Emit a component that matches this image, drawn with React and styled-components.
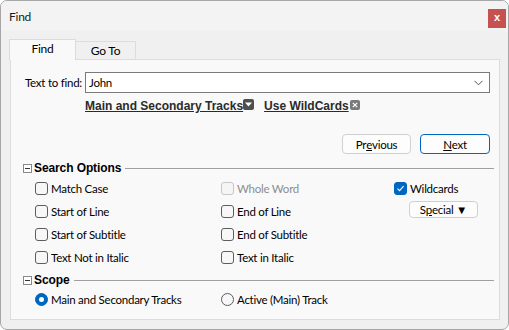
import React from 'react';
import styled, { createGlobalStyle } from 'styled-components';

const GlobalStyle = createGlobalStyle`
  html, body {
    margin: 0;
    padding: 0;
    background: #ffffff;
  }
  body {
    font-family: Lato, "Noto Sans", sans-serif;
    font-size: 11.5px;
    letter-spacing: -0.25px;
    color: #1a1a1a;
  }
`;

const Window = styled.div`
  width: 509px;
  height: 330px;
  box-sizing: border-box;
  border: 1px solid #a6a6a6;
  border-radius: 7px;
  background: #f0f0f0;
  overflow: hidden;
  display: flex;
  flex-direction: column;
`;

const TitleBar = styled.div`
  height: 30px;
  flex: none;
  background: #f3f3f3;
  display: flex;
  align-items: center;
  justify-content: space-between;
  padding: 0 2px 0 8px;
`;

const Title = styled.span`
  font-size: 12px;
  color: #1a1a1a;
`;

const CloseBox = styled.div`
  width: 18px;
  height: 19px;
  margin-top: 4px;
  background: #c75050;
  color: #fff;
  display: flex;
  align-items: center;
  justify-content: center;
  font-family: "Liberation Sans", sans-serif;
  font-weight: bold;
  font-size: 11px;
  letter-spacing: 0;
  line-height: 1;
  padding-bottom: 2px;
  box-sizing: border-box;
`;

const Body = styled.div`
  flex: 1;
  padding: 8px 10px 0 8px;
  display: flex;
  flex-direction: column;
`;

const Tabs = styled.div`
  display: flex;
  align-items: flex-end;
  height: 21px;
  position: relative;
  z-index: 1;
  margin-bottom: -1px;
`;

const Tab = styled.div`
  box-sizing: border-box;
  width: ${p => p.$w}px;
  height: ${p => (p.$active ? 21 : 19)}px;
  border: 1px solid #dcdcdc;
  border-bottom: ${p => (p.$active ? 'none' : '1px solid #dcdcdc')};
  border-left: ${p => (p.$active ? '1px solid #dcdcdc' : 'none')};
  background: ${p => (p.$active ? '#f9f9f9' : '#f0f0f0')};
  display: flex;
  align-items: center;
  justify-content: center;
  padding-bottom: ${p => (p.$active ? 3 : 0)}px;
  font-size: 12px;
  color: #000;
`;

const Panel = styled.div`
  box-sizing: border-box;
  width: 490px;
  height: 261px;
  margin-left: 1px;
  border: 1px solid #dcdcdc;
  background: #f9f9f9;
  padding: 12px 5px 0 12px;
  display: flex;
  flex-direction: column;
`;

const FindRow = styled.div`
  display: grid;
  grid-template-columns: 59px 1fr;
  column-gap: 3px;
  align-items: center;
  margin-right: 4px;
`;

const Label = styled.label`
  text-align: right;
  white-space: nowrap;
  color: #000;
`;

const ComboBox = styled.div`
  box-sizing: border-box;
  height: 21px;
  border: 1px solid #7a7a7a;
  background: #fff;
  display: flex;
  align-items: center;
  justify-content: space-between;
  padding: 0 6px 0 3px;
  color: #000;
`;

const LinksRow = styled.div`
  height: 22px;
  margin-top: 2px;
  margin-left: 62px;
  display: flex;
  align-items: center;
`;

const LinkText = styled.span`
  font-family: "Liberation Sans", sans-serif;
  font-weight: bold;
  font-size: 12px;
  letter-spacing: 0;
  color: #2b2b2b;
  text-decoration: underline;
  margin-left: ${p => p.$ml || 0}px;
`;

const IconBox = styled.span`
  width: ${p => p.$s}px;
  height: ${p => p.$s}px;
  border-radius: 2px;
  background: ${p => p.$bg};
  display: inline-flex;
  align-items: center;
  justify-content: center;
  margin-left: ${p => p.$ml || 0}px;
  margin-top: -3px;
`;

const ButtonsRow = styled.div`
  display: flex;
  justify-content: flex-end;
  gap: 9px;
  margin: 17px 4px 0 0;
`;

const Button = styled.div`
  box-sizing: border-box;
  width: ${p => p.$w}px;
  height: ${p => p.$h || 20}px;
  border: 1px solid ${p => (p.$primary ? '#0067c0' : '#d0d0d0')};
  border-radius: 4px;
  background: #fdfdfd;
  display: flex;
  align-items: center;
  justify-content: center;
  color: #000;
  margin-left: ${p => p.$ml || 0}px;
`;

const SectionHeader = styled.div`
  height: 16px;
  margin-top: ${p => p.$mt}px;
  display: flex;
  align-items: center;
`;

const Collapse = styled.span`
  box-sizing: border-box;
  width: 9px;
  height: 9px;
  border: 1px solid #8a8a8a;
  background: #fff;
  position: relative;
  flex: none;

  &::after {
    content: '';
    position: absolute;
    left: 1px;
    right: 1px;
    top: 3px;
    height: 1px;
    background: #333;
  }
`;

const SectionTitle = styled.span`
  font-family: "Liberation Sans", sans-serif;
  font-weight: bold;
  font-size: 12px;
  letter-spacing: -0.1px;
  color: #000;
  margin-left: 2px;
`;

const Rule = styled.span`
  flex: 1;
  height: 1px;
  background: #a0a0a0;
  margin-left: 4px;
`;

const OptionsGrid = styled.div`
  display: grid;
  grid-template-columns: 186px 173px 1fr;
  grid-auto-rows: 23px;
  margin-left: 12px;
  margin-top: 1px;
`;

const Option = styled.div`
  display: flex;
  align-items: center;
  gap: 3px;
  color: ${p => (p.$disabled ? '#8d8d8d' : '#000')};
  white-space: nowrap;
`;

const Box = styled.span`
  box-sizing: border-box;
  width: 13px;
  height: 13px;
  border-radius: ${p => (p.$round ? '50%' : '3px')};
  border: 1px solid ${p => (p.$on ? '#0067c0' : p.$disabled ? '#c6c6c6' : '#5d5d5d')};
  background: ${p => (p.$on ? '#0067c0' : p.$disabled ? '#f5f5f5' : '#f7f7f7')};
  display: inline-flex;
  align-items: center;
  justify-content: center;
  flex: none;
`;

const Dot = styled.span`
  width: 5px;
  height: 5px;
  border-radius: 50%;
  background: #fff;
`;

const SpecialCell = styled.div`
  display: flex;
  align-items: flex-start;
  padding-top: 1px;
`;

const RadioRow = styled.div`
  display: grid;
  grid-template-columns: 186px 1fr;
  height: 22px;
  align-items: center;
  margin-left: 12px;
`;

const Check = () => (
  <svg width="9" height="9" viewBox="0 0 9 9">
    <path d="M1.5 4.6 L3.6 6.6 L7.6 2.2" fill="none" stroke="#fff" strokeWidth="1.1" />
  </svg>
);

const CheckBox = ({ label, on, disabled }) => (
  <Option $disabled={disabled}>
    <Box $on={on} $disabled={disabled}>{on && <Check />}</Box>
    {label}
  </Option>
);

const Radio = ({ label, on }) => (
  <Option>
    <Box $round $on={on}>{on && <Dot />}</Box>
    {label}
  </Option>
);

const Header = ({ title, mt }) => (
  <SectionHeader $mt={mt}>
    <Collapse />
    <SectionTitle>{title}</SectionTitle>
    <Rule />
  </SectionHeader>
);

export default function App() {
  return (
    <>
      <GlobalStyle />
      <Window>
        <TitleBar>
          <Title>Find</Title>
          <CloseBox>x</CloseBox>
        </TitleBar>
        <Body>
          <Tabs>
            <Tab $active $w={67}>Find</Tab>
            <Tab $w={60}>Go To</Tab>
          </Tabs>
          <Panel>
            <FindRow>
              <Label>Text to find:</Label>
              <ComboBox>
                <span>John</span>
                <svg width="9" height="6" viewBox="0 0 9 6">
                  <path d="M0.5 0.8 L4.5 4.8 L8.5 0.8" fill="none" stroke="#555" strokeWidth="1" />
                </svg>
              </ComboBox>
            </FindRow>
            <LinksRow>
              <LinkText>Main and Secondary Tracks</LinkText>
              <IconBox $s={11} $bg="#4f4f4f">
                <svg width="7" height="5" viewBox="0 0 7 5">
                  <path d="M0 0.5 H7 L3.5 4.5 Z" fill="#fff" />
                </svg>
              </IconBox>
              <LinkText $ml={10}>Use WildCards</LinkText>
              <IconBox $s={10} $bg="#7a7a7a" $ml={1}>
                <svg width="6" height="6" viewBox="0 0 6 6">
                  <path d="M0.8 0.8 L5.2 5.2 M5.2 0.8 L0.8 5.2" stroke="#fff" strokeWidth="1.2" />
                </svg>
              </IconBox>
            </LinksRow>
            <ButtonsRow>
              <Button $w={69}>Pr<u>e</u>vious</Button>
              <Button $w={70} $primary><u>N</u>ext</Button>
            </ButtonsRow>
            <Header title="Search Options" mt={6} />
            <OptionsGrid>
              <CheckBox label="Match Case" />
              <CheckBox label="Whole Word" disabled />
              <CheckBox label="Wildcards" on />
              <CheckBox label="Start of Line" />
              <CheckBox label="End of Line" />
              <SpecialCell>
                <Button $w={69} $h={17} $ml={15}>S<u>p</u>ecial&nbsp;▼</Button>
              </SpecialCell>
              <CheckBox label="Start of Subtitle" />
              <CheckBox label="End of Subtitle" />
              <span />
              <CheckBox label="Text Not in Italic" />
              <CheckBox label="Text in Italic" />
              <span />
            </OptionsGrid>
            <Header title="Scope" mt={3} />
            <RadioRow>
              <Radio label="Main and Secondary Tracks" on />
              <Radio label="Active (Main) Track" />
            </RadioRow>
          </Panel>
        </Body>
      </Window>
    </>
  );
}
